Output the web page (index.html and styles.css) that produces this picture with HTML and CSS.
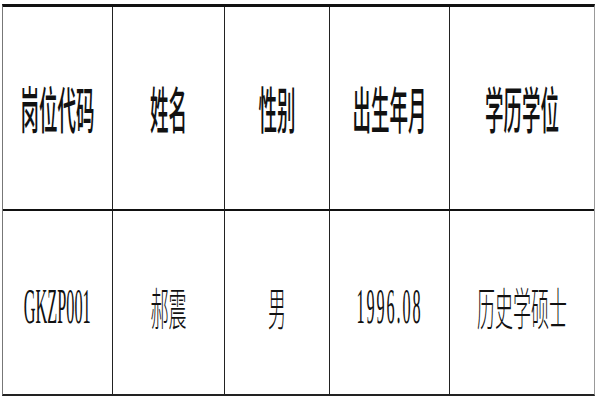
FILE: index.html
```html
<!DOCTYPE html>
<html lang="zh-CN">
<head>
<meta charset="utf-8">
<title>岗位信息表</title>
<link rel="stylesheet" href="styles.css">
</head>
<body>
<div class="sheet">
  <div class="cell head"><span class="t hd">岗位代码</span></div>
  <div class="cell head"><span class="t hd">姓名</span></div>
  <div class="cell head"><span class="t hd">性别</span></div>
  <div class="cell head"><span class="t hd">出生年月</span></div>
  <div class="cell head last"><span class="t hd">学历学位</span></div>
  <div class="cell body"><span class="t num code">GKZP001</span></div>
  <div class="cell body"><span class="t cn">郝震</span></div>
  <div class="cell body"><span class="t cn">男</span></div>
  <div class="cell body"><span class="t num date">1996.08</span></div>
  <div class="cell body last"><span class="t cn">历史学硕士</span></div>
</div>
</body>
</html>
```

FILE: styles.css
```css
html, body {
  margin: 0;
  padding: 0;
  background: #ffffff;
}

body {
  width: 600px;
  height: 400px;
  overflow: hidden;
}

.sheet {
  margin: 4px 0 0 2px;
  width: 591px;
  display: grid;
  grid-template-columns: 110px 112px 105px 120px 144px;
  grid-template-rows: 204px 183px;
  border-top: 3px solid #111;
  border-left: 1px solid #777;
  border-right: 1px solid #999;
  border-bottom: 2px solid #222;
}

.cell {
  display: flex;
  align-items: center;
  justify-content: center;
  border-right: 1px solid #222;
  overflow: hidden;
}

.cell.last {
  border-right: none;
}

.head {
  border-bottom: 2px solid #111;
}

.t {
  display: inline-block;
  white-space: nowrap;
  color: #111;
  transform-origin: center center;
}

.hd {
  font-family: "Noto Sans CJK SC", "Noto Sans", sans-serif;
  font-size: 18.5px;
  font-weight: 500;
  line-height: 1;
  transform: scale(1, 2.7);
}

.cn {
  font-family: "Noto Sans CJK SC", "Noto Sans", sans-serif;
  font-size: 18px;
  font-weight: 300;
  line-height: 1;
  margin-top: 6px;
  transform: scale(1, 2.5);
}

.num {
  font-family: "Liberation Serif", "DejaVu Serif", serif;
  font-size: 22px;
  line-height: 1;
  margin-top: 8px;
}

.code {
  transform: scale(0.74, 2.3);
}

.date {
  letter-spacing: 2.5px;
  transform: scale(0.74, 2.3);
}
```
